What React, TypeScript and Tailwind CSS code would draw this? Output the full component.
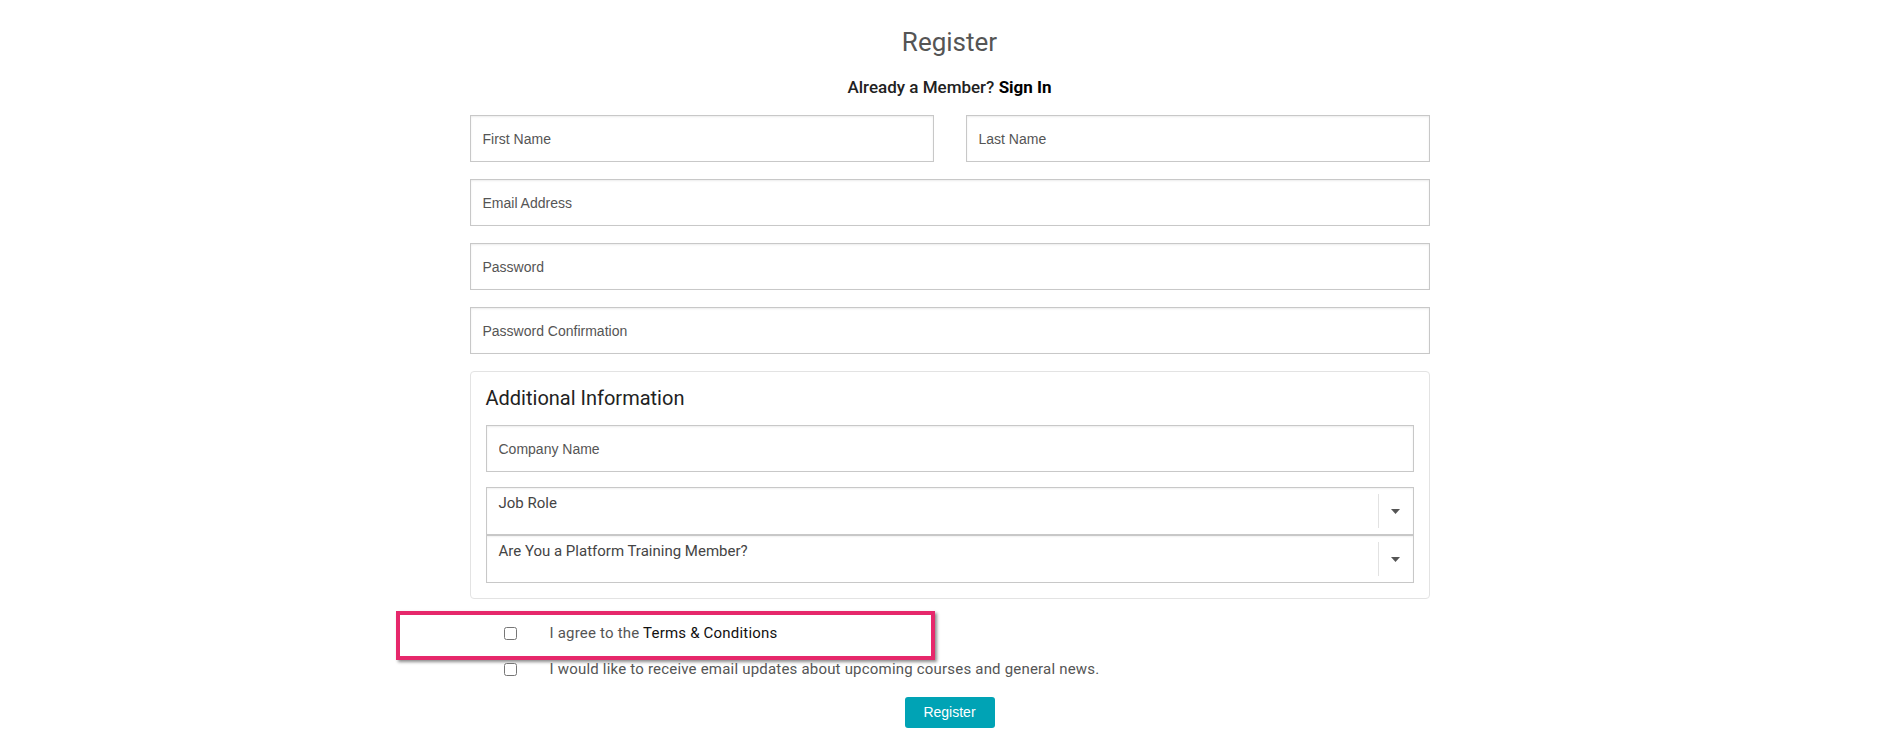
import React from 'react';

const inputBox =
  'w-full h-[47px] border border-[#c8c8c8] bg-white px-[12px] text-[14px] text-[#444] placeholder:text-[#555] shadow-[inset_0_1px_2px_rgba(0,0,0,0.08)] outline-none';

const Field = ({ placeholder }: { placeholder: string }) => (
  <input
    type="text"
    placeholder={placeholder}
    className={inputBox}
    style={{ fontFamily: '"Liberation Sans", Arial, sans-serif' }}
  />
);

const SelectBox = ({ label }: { label: string }) => (
  <div className="relative flex h-[48px] w-full border border-[#c8c8c8] bg-white shadow-[inset_0_1px_2px_rgba(0,0,0,0.06)]">
    <div className="flex-1 pl-[12px] pt-[4px] text-[15px] text-[#444]">{label}</div>
    <div className="my-[6px] w-px bg-[#e2e2e2]" />
    <div className="flex w-[34px] items-center justify-center">
      <svg width="9" height="5" viewBox="0 0 9 5">
        <path d="M0 0 L9 0 L4.5 5 Z" fill="#555" />
      </svg>
    </div>
  </div>
);

export default function App() {
  return (
    <div
      className="min-h-screen bg-white"
      style={{ fontFamily: 'Roboto, "Noto Sans", sans-serif' }}
    >
      <div className="mx-auto w-[960px] pt-[26px]">
        <h1 className="text-center text-[26px] leading-[32px] text-[#555]">Register</h1>
        <p className="mt-[18px] text-center text-[17px] font-medium leading-[22px] text-[#222]">
          Already a Member? <a href="#" className="font-bold text-black">Sign In</a>
        </p>

        <div className="mt-[17px] grid grid-cols-2 gap-x-[32px]">
          <Field placeholder="First Name" />
          <Field placeholder="Last Name" />
        </div>
        <div className="mt-[17px]">
          <Field placeholder="Email Address" />
        </div>
        <div className="mt-[17px]">
          <Field placeholder="Password" />
        </div>
        <div className="mt-[17px]">
          <Field placeholder="Password Confirmation" />
        </div>

        <div className="mt-[17px] rounded-[4px] border border-[#e3e3e3] px-[15px] pt-[12px] pb-[15px]">
          <h2 className="mb-[13px] text-[20px] leading-[28px] text-[#222]">Additional Information</h2>
          <Field placeholder="Company Name" />
          <div className="mt-[15px]">
            <SelectBox label="Job Role" />
            <SelectBox label="Are You a Platform Training Member?" />
          </div>
        </div>

        <div className="ml-[-74px] mt-[12px] w-[539px]">
          <label className="flex h-[49px] items-center border-4 border-[#e6286b] pb-[4px] pl-[104px] shadow-[2px_2px_3px_rgba(0,0,0,0.45)]">
            <input type="checkbox" className="h-[13px] w-[13px]" />
            <span className="ml-[33px] text-[15px] tracking-[0.2px] text-[#555]">
              I agree to the <a href="#" className="text-[#111]">Terms &amp; Conditions</a>
            </span>
          </label>
          <label className="flex h-[19px] w-[800px] items-center pl-[108px]">
            <input type="checkbox" className="h-[13px] w-[13px]" />
            <span className="ml-[33px] text-[15px] tracking-[0.2px] text-[#555]">
              I would like to receive email updates about upcoming courses and general news.
            </span>
          </label>
        </div>

        <div className="mt-[18px] flex justify-center">
          <button
            className="h-[31px] w-[90px] rounded-[3px] bg-[#00a3b5] text-[14px] text-white"
            style={{ fontFamily: '"Liberation Sans", Arial, sans-serif' }}
          >
            Register
          </button>
        </div>
      </div>
    </div>
  );
}
